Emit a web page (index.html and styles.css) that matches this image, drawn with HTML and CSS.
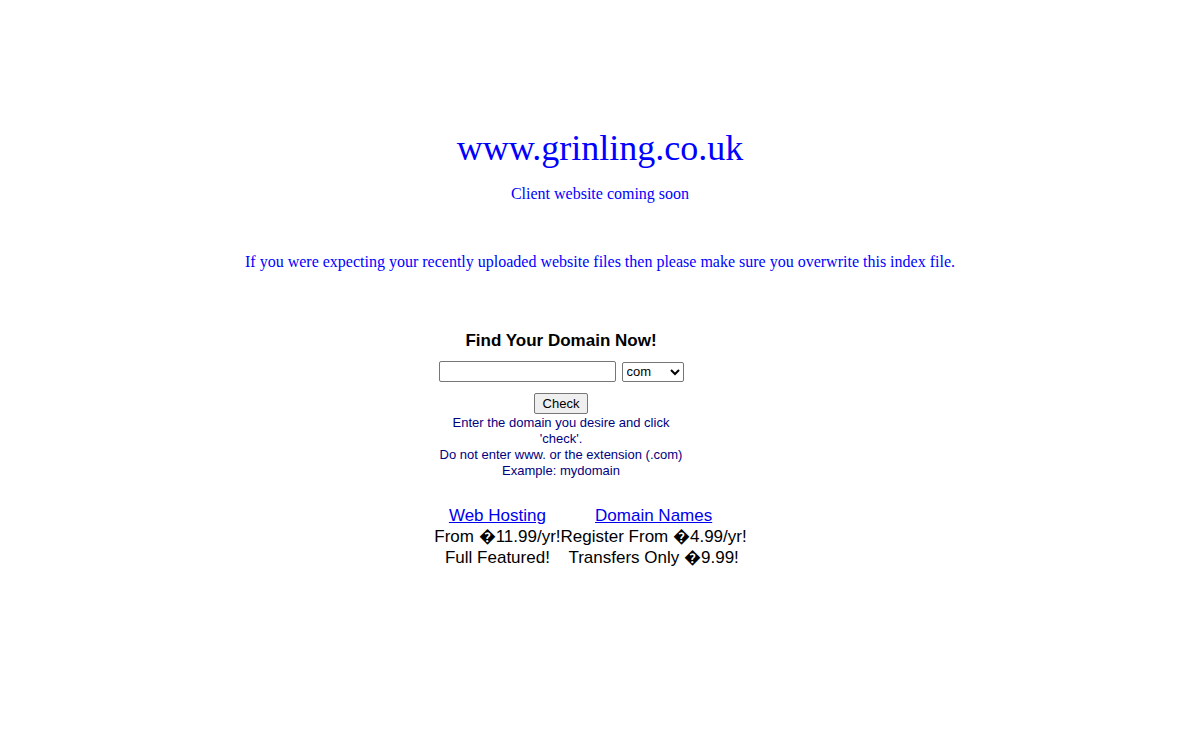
FILE: index.html
```html
<!DOCTYPE html>
<html>
<head>
<meta charset="utf-8">
<title>www.grinling.co.uk</title>
<link rel="stylesheet" href="styles.css">
</head>
<body>
<div class="page">
  <h1 class="title">www.grinling.co.uk</h1>
  <p class="sub">Client website coming soon</p>
  <p class="note">If you were expecting your recently uploaded website files then please make sure you overwrite this index file.</p>

  <form class="domain">
    <div class="domain-head">Find Your Domain Now!</div>
    <div class="domain-row">
      <input class="domain-input" type="text">
      <select class="domain-select">
        <option>com</option>
      </select>
    </div>
    <div class="domain-btn-row"><button type="button" class="domain-btn">Check</button></div>
    <div class="domain-help">Enter the domain you desire and click 'check'.<br>Do not enter www. or the extension (.com)<br>Example: mydomain</div>
  </form>

  <div class="offers">
    <div class="offer">
      <a href="#" class="offer-link">Web Hosting</a>
      <span>From &#xFFFD;11.99/yr!</span>
      <span>Full Featured!</span>
    </div>
    <div class="offer">
      <a href="#" class="offer-link">Domain Names</a>
      <span>Register From &#xFFFD;4.99/yr!</span>
      <span>Transfers Only &#xFFFD;9.99!</span>
    </div>
  </div>
</div>
</body>
</html>
```
FILE: styles.css
```css
html, body {
  margin: 0;
  padding: 0;
  background: #ffffff;
}
.page {
  display: flex;
  flex-direction: column;
  align-items: center;
  padding-top: 126px;
  font-family: "Liberation Serif", "Times New Roman", serif;
  color: #0000ff;
}
.title {
  margin: 0;
  font-size: 36px;
  font-weight: normal;
  line-height: 44px;
}
.sub {
  margin: 14px 0 0 0;
  font-size: 16px;
  line-height: 20px;
}
.note {
  margin: 48px 0 0 0;
  font-size: 16px;
  line-height: 20px;
}
.domain {
  margin: 59px 78px 0 0;
  width: 246px;
  display: flex;
  flex-direction: column;
  align-items: center;
  font-family: "Liberation Sans", Arial, sans-serif;
}
.domain-head {
  font-weight: bold;
  font-size: 17px;
  line-height: 20px;
  color: #000000;
}
.domain-row {
  margin-top: 10px;
  display: flex;
  gap: 6px;
  align-items: center;
}
.domain-input {
  box-sizing: border-box;
  width: 177px;
  height: 21px;
  margin: 0;
  border: 1px solid #767676;
  border-radius: 2px;
  padding: 1px 2px;
}
.domain-select {
  box-sizing: border-box;
  width: 62px;
  height: 20px;
  margin: 0;
  font-family: "Liberation Sans", Arial, sans-serif;
  font-size: 13px;
  border: 1px solid #767676;
  border-radius: 2px;
  background: #ffffff;
}
.domain-btn-row {
  margin-top: 11px;
  display: flex;
  justify-content: center;
}
.domain-btn {
  box-sizing: border-box;
  height: 21px;
  width: 54px;
  margin: 0;
  padding: 1px 6px;
  font-family: "Liberation Sans", Arial, sans-serif;
  font-size: 13px;
  border: 1px solid #767676;
  border-radius: 2px;
  background: #efefef;
  color: #000;
}
.domain-help {
  margin-top: 1px;
  text-align: center;
  font-size: 13px;
  line-height: 16px;
  color: #000080;
}
.offers {
  margin: 26px 19px 0 0;
  display: flex;
  font-family: "Liberation Sans", Arial, sans-serif;
  font-size: 17px;
  line-height: 21px;
  color: #000000;
}
.offer {
  display: flex;
  flex-direction: column;
  align-items: center;
}
.offer-link {
  color: #0000ee;
  text-decoration: underline;
}
```
